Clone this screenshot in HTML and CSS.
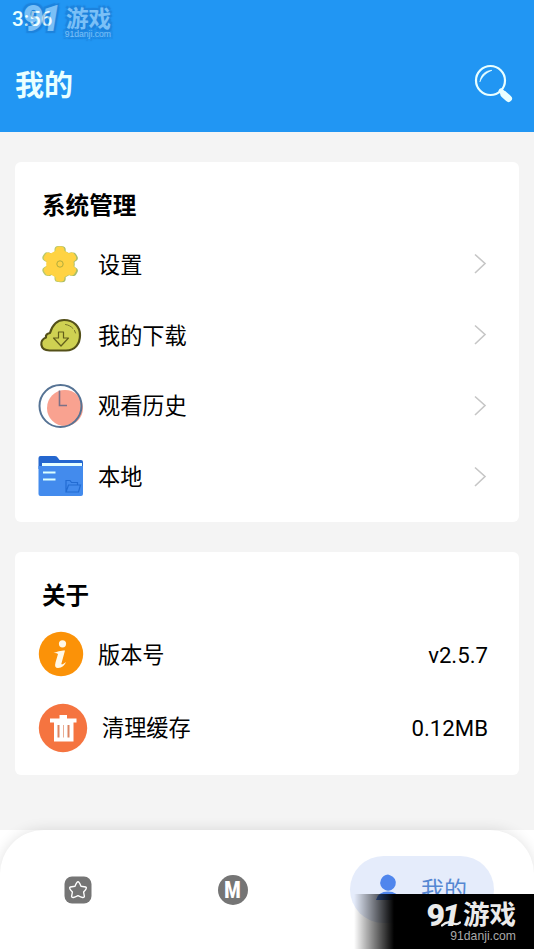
FILE: index.html
```html
<!DOCTYPE html>
<html lang="zh-CN">
<head>
<meta charset="utf-8">
<title>我的</title>
<link rel="stylesheet" href="styles.css">
</head>
<body>
<div class="app">
  <header class="header">
    <div class="status">3:56</div>
    <div class="bar">
      <h1 class="page-title">我的</h1>
      <svg class="search" width="40" height="40" viewBox="0 0 40 40" fill="none" stroke="#e9ffff" stroke-linecap="round">
        <circle cx="16.500" cy="16.500" r="14.500" stroke-width="2.200"/>
        <path d="M6 17.500C6.500 11 11.500 6.500 18 6.300C12.500 8.500 8.500 12 6 17.500Z" fill="#e9ffff" stroke-width=".6"/>
        <path d="M27 27L29.500 29.500" stroke-width="5"/>
        <path d="M30 30.500L34.500 34.500" stroke-width="7"/>
      </svg>
    </div>
    <div class="brand brand-top">
      <div class="brand-main"><span class="brand-num">9<i>1</i></span><span class="brand-cn">游戏</span></div>
      <div class="brand-url">91danji.com</div>
    </div>
  </header>

  <main class="content">
    <section class="card">
      <h2 class="card-title">系统管理</h2>
      <div class="row">
        <svg class="icon" width="44" height="44" viewBox="0 0 44 44">
          <g fill="#a9bd68" transform="translate(1.200 .3)"><circle cx="22" cy="22" r="13.500"/><g id="teeth"><rect x="17.500" y="4" width="9" height="36" rx="3.500"/><rect x="17.500" y="4" width="9" height="36" rx="3.500" transform="rotate(60 22 22)"/><rect x="17.500" y="4" width="9" height="36" rx="3.500" transform="rotate(120 22 22)"/></g></g>
          <g fill="#b8c96c" transform="translate(-1 0)"><use href="#teeth"/></g>
          <g fill="#ffd343"><circle cx="22" cy="22" r="13.800"/><rect x="17.500" y="4.500" width="9" height="35" rx="3.500"/><rect x="17.500" y="4.500" width="9" height="35" rx="3.500" transform="rotate(60 22 22)"/><rect x="17.500" y="4.500" width="9" height="35" rx="3.500" transform="rotate(120 22 22)"/></g>
          <circle cx="22" cy="22" r="3.200" fill="none" stroke="#b1ac3c"/>
        </svg>
        <span class="label">设置</span>
        <svg class="chevron" width="14" height="22" viewBox="0 0 14 22"><path d="M1 1.500L11 10.500L1 20"/></svg>
      </div>
      <div class="row">
        <svg class="icon" width="44" height="44" viewBox="0 0 44 44" fill="none" stroke-linejoin="round" stroke-linecap="round">
          <path d="M11.500 37.500C1.500 37.500 1 27 8 24.500C7.500 22 9 20.500 12 20C15 10 20 7 26 7C36 7 42 14 42 22C42 31 37 37.500 28 37.500Z" fill="#cfd152" stroke="#545019" stroke-width="2.200"/>
          <path d="M20.500 19H25.500V25H30.500L23 33L15.500 25H20.500Z" stroke="#625e1b" stroke-width="1.200"/>
          <path d="M27.500 11.500C31 12 33 13.500 35 15.500M36.500 17.500L37.500 20" stroke="#77742a" stroke-width="1"/>
        </svg>
        <span class="label">我的下载</span>
        <svg class="chevron" width="14" height="22" viewBox="0 0 14 22"><path d="M1 1.500L11 10.500L1 20"/></svg>
      </div>
      <div class="row">
        <svg class="icon" width="46" height="46" viewBox="0 0 46 46" fill="none">
          <circle cx="27" cy="25" r="18" fill="#f9a290"/>
          <circle cx="22.500" cy="23" r="21" stroke="#567394" stroke-width="2"/>
          <path d="M21.500 7.500V22.500H29" stroke="#7b7187" stroke-width="1.600"/>
        </svg>
        <span class="label">观看历史</span>
        <svg class="chevron" width="14" height="22" viewBox="0 0 14 22"><path d="M1 1.500L11 10.500L1 20"/></svg>
      </div>
      <div class="row">
        <svg class="icon" width="46" height="44" viewBox="0 1 46 44">
          <path d="M.5 14V4Q.5 2 2.500 2H17Q19 2 20 4L21.500 6H43Q45 6 45 8V15H.5Z" fill="#2467cf"/>
          <path d="M4 9H44V14H4Z" fill="#e6ffff"/>
          <path d="M.5 12H45V40Q45 42 43 42H2.500Q.5 42 .5 40Z" fill="#438bed"/>
          <path d="M5 18.500H17.500M5 25.500H17.500" stroke="#dcffff" stroke-width="2"/>
          <path d="M28 38V26.500H32L33.500 28.500H39.500V31M28 38L30.500 31H42.500L40.500 38Z" fill="none" stroke="#236cd2" stroke-width="1.200"/>
        </svg>
        <span class="label">本地</span>
        <svg class="chevron" width="14" height="22" viewBox="0 0 14 22"><path d="M1 1.500L11 10.500L1 20"/></svg>
      </div>
    </section>

    <section class="card about">
      <h2 class="card-title">关于</h2>
      <div class="row">
        <svg class="icon" width="46" height="46" viewBox="0 0 46 46">
          <circle cx="23" cy="23" r="22.200" fill="#fb9208"/>
          <circle cx="24.500" cy="12.800" r="3.600" fill="#fff8e8"/>
          <path d="M15.500 22Q22 19 27 19.500L23.300 33Q24 34.500 28 31Q26 36.500 20 37Q16 37 17.500 31.500L20 23Q18.500 21.500 15.500 22Z" fill="#fff8e8"/>
        </svg>
        <span class="label">版本号</span>
        <span class="value">v2.5.7</span>
      </div>
      <div class="row tall">
        <svg class="icon" width="50" height="50" viewBox="0 0 50 50">
          <circle cx="25" cy="25" r="24.200" fill="#f57440"/>
          <path d="M12 15.500H21.500V12H29V15.500H38.500V19.500H35.500V38.500H16V19.500H12Z" fill="#fff"/>
          <path d="M20.500 22V34.500M30.500 22V34.500" stroke="#dd8563" stroke-width="2"/>
          <path d="M25.500 22V34.500" stroke="#e9ad95" stroke-width="1"/>
        </svg>
        <span class="label">清理缓存</span>
        <span class="value">0.12MB</span>
      </div>
    </section>
  </main>

  <nav class="nav">
    <div class="tab">
      <svg width="28" height="28" viewBox="0 0 28 28">
        <rect x=".5" y=".5" width="27" height="27" rx="7.500" fill="#757575"/>
        <path d="M14 5.800Q15.200 5.800 17 10.300L21.700 11Q23.700 12 19.600 16L20.400 20.500Q20 23 14 19.700Q8 23 7.600 20.500L8.400 16Q4.300 12 6.300 11L11 10.300Q12.800 5.800 14 5.800Z" fill="none" stroke="#fff" stroke-width="1.400" stroke-linejoin="round"/>
      </svg>
    </div>
    <div class="tab"><span class="m-badge"><b>M</b></span></div>
    <div class="tab active">
      <svg width="28" height="28" viewBox="0 0 28 28" fill="#5086ed"><path d="M14 .5L16 1.300A7.800 7.800 0 1 1 7 5.500Q9 1 14 .5Z"/><path d="M2 26Q4 17.500 14 17.500T26 26Z"/></svg>
      <span>我的</span>
    </div>
  </nav>
  <div class="brand brand-bottom">
    <div class="brand-main">
      <span class="brand-num">9<i>1</i></span>
      <svg class="swoosh" width="20" height="8" viewBox="0 0 20 8"><path d="M1 6.500Q6 1.500 11 4T19 3.500" fill="none" stroke="#ebebeb" stroke-width="2.400" stroke-linecap="round"/></svg>
      <span class="brand-cn">游戏</span>
    </div>
    <div class="brand-url">91danji.com</div>
  </div>
</div>
</body>
</html>
```
FILE: styles.css
```css
* { box-sizing: border-box; }
body { margin: 0; font-family: Roboto, "Noto Sans CJK SC", sans-serif; color: #000; }
.app {
  position: relative;
  width: 534px;
  height: 949px;
  display: flex;
  flex-direction: column;
  overflow: hidden;
  background: #fff;
}
.header {
  position: relative;
  height: 132px;
  flex: none;
  background: #2196f3;
  color: #e9ffff;
}
.status { height: 36px; padding: 2px 12px 0; font-size: 20.500px; line-height: 34px; font-weight: 500; }
.bar {
  height: 96px;
  padding: 0 20px 0 15px;
  display: flex;
  align-items: center;
  justify-content: space-between;
}
.page-title { margin: 4px 0 0; font-size: 29px; line-height: 40px; font-weight: 700; }
.search { display: block; }
.content {
  height: 698px;
  flex: none;
  padding: 30px 15px;
  display: flex;
  flex-direction: column;
  gap: 30px;
  background: #f4f4f4;
}
.card { height: 360px; padding: 26px 31px 0 23px; border-radius: 6px; background: #fff; }
.about { height: 223px; }
.card-title { margin: 0 0 5px 4px; font-size: 23.600px; line-height: 36px; font-weight: 700; }
.row { height: 70.800px; display: flex; align-items: center; }
.icon { flex: none; }
.icon[width="44"] { margin-right: 2px; }
.label { margin: 1px 0 0 14px; font-size: 22.200px; line-height: 32px; }
.chevron { margin-left: auto; fill: none; stroke: #c6c6c6; stroke-width: 1.600; }
.value { margin: 1px 0 0 auto; font-size: 22.200px; line-height: 32px; }
.tall { height: 76px; }
.nav {
  height: 119px;
  flex: none;
  display: flex;
  border-radius: 44px 44px 0 0;
  padding: 26px 40px 26px 0;
  background: #fff;
  box-shadow: 0 0 14px rgba(0, 0, 0, .12);
}
.tab { height: 67px; width: 155px; display: flex; align-items: center; justify-content: center; }
.m-badge {
  width: 30px;
  height: 30px;
  display: flex;
  align-items: center;
  justify-content: center;
  border-radius: 50%;
  background: #757575;
  color: #fff;
}
.m-badge b { font-size: 24px; line-height: 30px; font-weight: 900; transform: scaleX(.78); }
.tab.active {
  width: 144px;
  margin-left: auto;
  gap: 19px;
  padding: 0 3px 3px 0;
  border-radius: 34px;
  background: #e5ecfb;
  color: #5587d2;
  font-size: 23px;
}
.brand { position: absolute; display: flex; flex-direction: column; align-items: flex-end; }
.brand-main { display: flex; align-items: center; }
.brand-num { font-family: Roboto, sans-serif; font-weight: 900; letter-spacing: -3px; }
.brand-cn { font-family: "Noto Sans CJK SC", sans-serif; font-weight: 700; }
.brand-url { font-family: "Liberation Sans", sans-serif; }
.brand-top {
  left: 20px;
  top: 5px;
  width: 91px;
  color: #fff;
  opacity: .4;
  text-shadow: -2px -2px 1px #1767bd, 2px -2px 1px #1767bd, -2px 2px 1px #1767bd, 2px 2px 1px #1767bd;
}
.brand-top .brand-main { height: 24px; gap: 8px; }
.brand-top .brand-num { font-size: 36px; line-height: 30px; padding-top: 4px; }
.brand-top .brand-cn { font-size: 22.500px; line-height: 24px; }
.brand-top .brand-url { font-size: 8.600px; line-height: 10px; }
.brand-bottom {
  right: 0;
  bottom: 0;
  width: 180px;
  height: 55px;
  padding: 6px 18px 0 0;
  color: #ebebeb;
  background: linear-gradient(90deg, transparent, #000 40px);
}
.brand-bottom .brand-main { position: relative; height: 28px; gap: 6px; }
.brand-bottom .brand-num { font-size: 32px; line-height: 28px; padding-top: 1px; }
.brand-bottom .brand-cn { font-size: 26.500px; line-height: 27px; margin-top: -3px; }
.brand-bottom .brand-url { font-size: 12.200px; line-height: 16px; color: #aaa; }
.swoosh { position: absolute; left: 15px; bottom: 1px; }
```
